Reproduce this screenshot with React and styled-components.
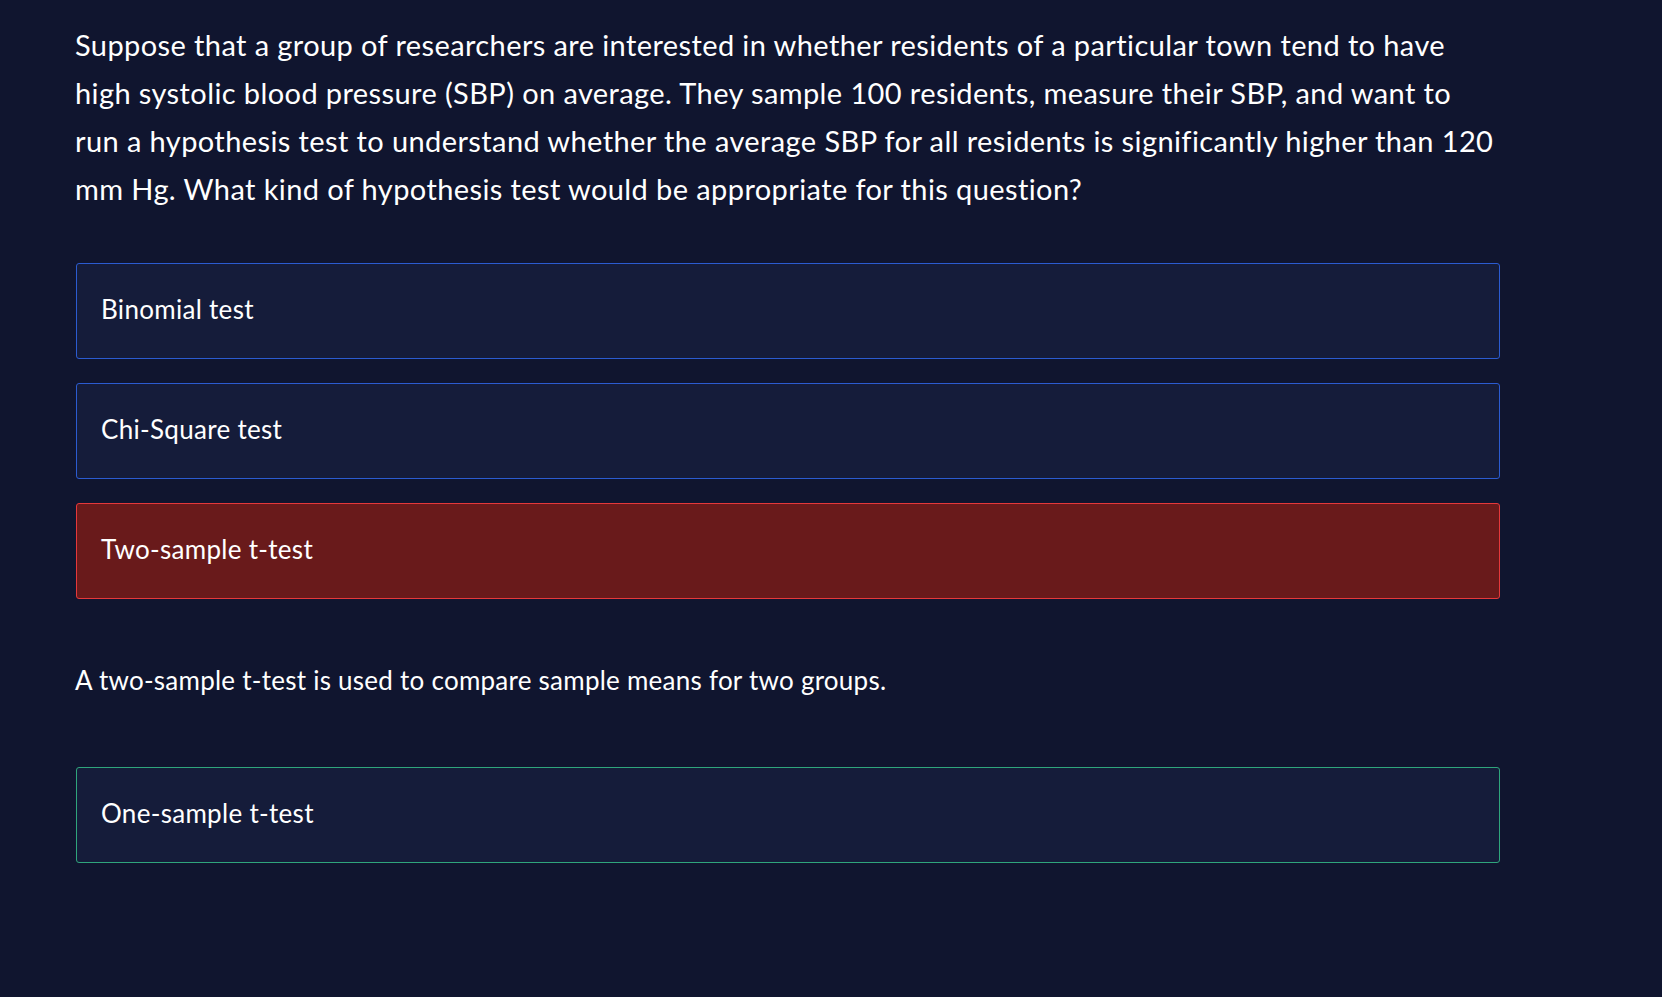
import React from 'react';
import styled, { createGlobalStyle } from 'styled-components';

const options = [
  { label: 'Binomial test', state: 'idle' },
  { label: 'Chi-Square test', state: 'idle' },
  { label: 'Two-sample t-test', state: 'wrong' },
];

// <App>: a single multiple-choice question with feedback
export default function App() {
  return (
    <>
      <GlobalStyle />
      <Page>
        <Question>
          Suppose that a group of researchers are interested in whether residents of a particular town tend to have<br />
          high systolic blood pressure (SBP) on average. They sample 100 residents, measure their SBP, and want to<br />
          run a hypothesis test to understand whether the average SBP for all residents is significantly higher than 120<br />
          mm Hg. What kind of hypothesis test would be appropriate for this question?
        </Question>
        <OptionList>
          {options.map((o) => (
            <Option key={o.label} state={o.state}>{o.label}</Option>
          ))}
        </OptionList>
        <Feedback>A two-sample t-test is used to compare sample means for two groups.</Feedback>
        <Option state="correct">One-sample t-test</Option>
      </Page>
    </>
  );
}

// styles
const GlobalStyle = createGlobalStyle`
  html, body {
    margin: 0;
    background: #10152f;
  }
  body {
    font-family: Lato, "Noto Sans", sans-serif;
    color: #ffffff;
  }
`;

const Page = styled.main`
  width: 1425px;
  padding: 21px 0 0 75px;
  min-height: 976px;
`;

const Question = styled.p`
  margin: 0 0 50px 0;
  font-size: 29px;
  line-height: 48px;
  letter-spacing: 0.4px;
  width: 1560px;
  white-space: nowrap;
`;

const OptionList = styled.div`
  display: flex;
  flex-direction: column;
  gap: 24px;
`;

const borders = {
  idle: '#2b5bd0',
  wrong: '#e5383b',
  correct: '#2fa57c',
};

const Option = styled.div`
  box-sizing: border-box;
  height: 96px;
  margin-left: 1px;
  padding: 0 24px 5px;
  display: flex;
  align-items: center;
  border: 1px solid ${(p) => borders[p.state]};
  border-radius: 3px;
  background: ${(p) => (p.state === 'wrong' ? '#691a1b' : '#151c3a')};
  font-size: 26px;
  letter-spacing: 0.3px;
`;

const Feedback = styled.p`
  margin: 61px 0 67px 0;
  font-size: 26px;
  line-height: 40px;
  letter-spacing: 0.25px;
`;
